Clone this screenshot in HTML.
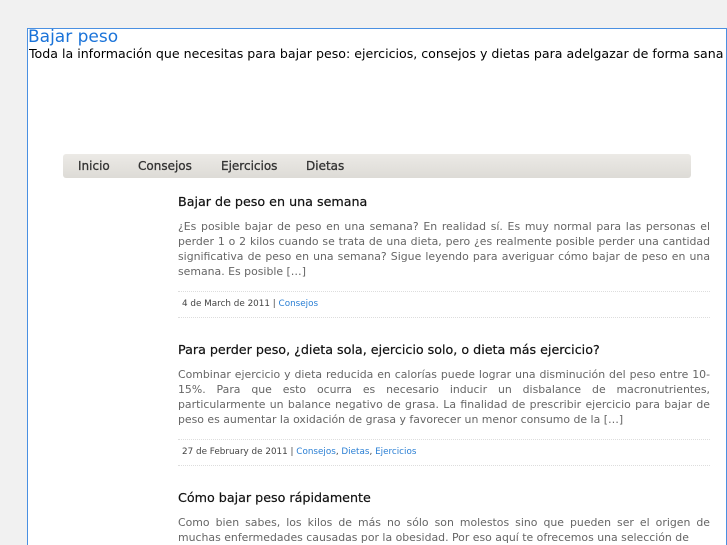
<!DOCTYPE html>
<html><head><meta charset="utf-8"><style>
html,body{margin:0;padding:0;overflow:hidden;}
body{width:727px;height:545px;overflow:hidden;background:#f1f1f1;font-family:"DejaVu Sans","Liberation Sans",sans-serif;position:relative;}
#box{position:absolute;left:27px;top:28px;width:698px;height:520px;background:#fff;border:1px solid #4a90e2;border-bottom:none;}
#t{position:absolute;left:28px;top:27px;font-size:17px;color:#1a73d9;}
#d{position:absolute;left:29px;top:46px;font-size:12.6px;color:#000;white-space:nowrap;}
#nav{position:absolute;left:63px;top:154px;width:628px;height:24px;border-radius:3px;background:linear-gradient(#eceae6,#dddbd6);}
#nav span{position:absolute;top:5px;font-size:12px;color:#333;-webkit-text-stroke:0.3px #333;}
.p{position:absolute;left:178px;width:532px;}
.p h2{margin:0;font-size:12.7px;font-weight:normal;color:#111;-webkit-text-stroke:0.2px #111;}
.p .b{margin-top:10px;font-size:10.9px;line-height:15px;color:#666;text-align:justify;}
.p .m{margin-top:12px;border-top:1px dotted #ddd;border-bottom:1px dotted #ddd;padding:6px 4px 7px;font-size:8.8px;color:#444;line-height:12px;}
.m a{color:#2a7fd4;text-decoration:none;}
</style></head><body>
<div id="box"></div>
<div id="t">Bajar peso</div>
<div id="d">Toda la información que necesitas para bajar peso: ejercicios, consejos y dietas para adelgazar de forma sana</div>
<div id="nav"><span style="left:15px">Inicio</span><span style="left:75px">Consejos</span><span style="left:158px">Ejercicios</span><span style="left:243px">Dietas</span></div>
<div class="p" style="top:194px"><h2>Bajar de peso en una semana</h2>
<div class="b">¿Es posible bajar de peso en una semana? En realidad sí. Es muy normal para las personas el perder 1 o 2 kilos cuando se trata de una dieta, pero ¿es realmente posible perder una cantidad significativa de peso en una semana? Sigue leyendo para averiguar cómo bajar de peso en una semana. Es posible […]</div>
<div class="m">4 de March de 2011 | <a>Consejos</a></div></div>
<div class="p" style="top:342px"><h2>Para perder peso, ¿dieta sola, ejercicio solo, o dieta más ejercicio?</h2>
<div class="b">Combinar ejercicio y dieta reducida en calorías puede lograr una disminución del peso entre 10-15%. Para que esto ocurra es necesario inducir un disbalance de macronutrientes, particularmente un balance negativo de grasa. La finalidad de prescribir ejercicio para bajar de peso es aumentar la oxidación de grasa y favorecer un menor consumo de la […]</div>
<div class="m">27 de February de 2011 | <a>Consejos</a>, <a>Dietas</a>, <a>Ejercicios</a></div></div>
<div class="p" style="top:490px"><h2>Cómo bajar peso rápidamente</h2>
<div class="b">Como bien sabes, los kilos de más no sólo son molestos sino que pueden ser el origen de muchas enfermedades causadas por la obesidad. Por eso aquí te ofrecemos una selección de</div></div>
</body></html>
